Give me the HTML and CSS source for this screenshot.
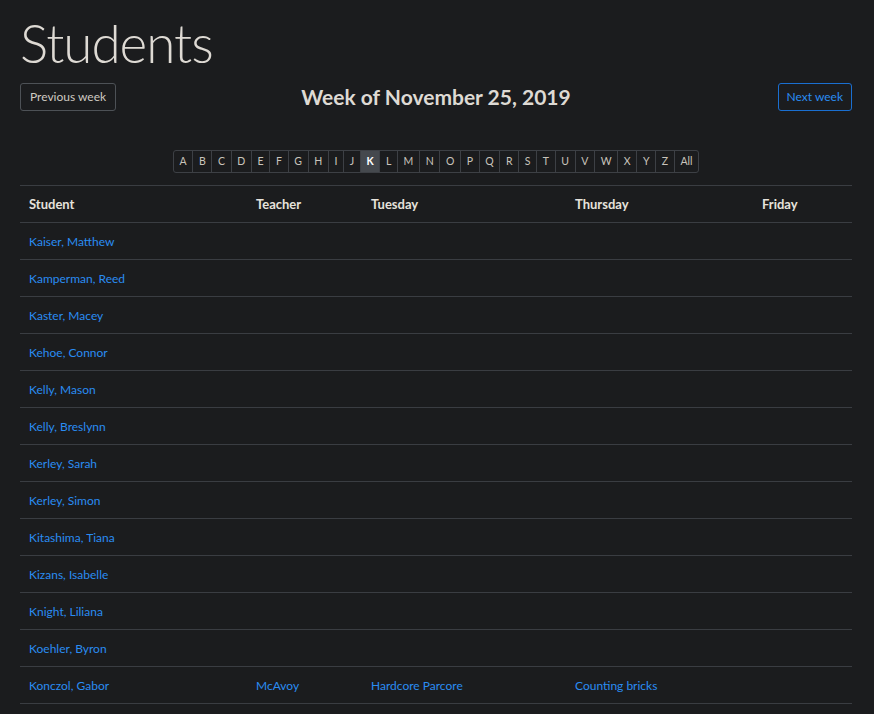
FILE: index.html
```html
<!DOCTYPE html>
<html lang="en">
<head>
<meta charset="utf-8">
<title>Students</title>
<link rel="stylesheet" href="styles.css">
</head>
<body>
<main class="page">
  <h1 class="title">Students</h1>
  <div class="week-nav">
    <div class="week-nav__left"><a class="btn btn--secondary" href="#">Previous week</a></div>
    <h4 class="week-nav__heading">Week of November 25, 2019</h4>
    <div class="week-nav__right"><a class="btn btn--primary" href="#">Next week</a></div>
  </div>
  <nav class="letters">
    <ul class="letters__list">
      <li><a href="#">A</a></li>
      <li><a href="#">B</a></li>
      <li><a href="#">C</a></li>
      <li><a href="#">D</a></li>
      <li><a href="#">E</a></li>
      <li><a href="#">F</a></li>
      <li><a href="#">G</a></li>
      <li><a href="#">H</a></li>
      <li><a href="#">I</a></li>
      <li><a href="#">J</a></li>
      <li class="is-active"><a href="#">K</a></li>
      <li><a href="#">L</a></li>
      <li><a href="#">M</a></li>
      <li><a href="#">N</a></li>
      <li><a href="#">O</a></li>
      <li><a href="#">P</a></li>
      <li><a href="#">Q</a></li>
      <li><a href="#">R</a></li>
      <li><a href="#">S</a></li>
      <li><a href="#">T</a></li>
      <li><a href="#">U</a></li>
      <li><a href="#">V</a></li>
      <li><a href="#">W</a></li>
      <li><a href="#">X</a></li>
      <li><a href="#">Y</a></li>
      <li><a href="#">Z</a></li>
      <li><a href="#">All</a></li>
    </ul>
  </nav>
  <table class="roster">
    <colgroup>
      <col class="col-student">
      <col class="col-teacher">
      <col class="col-tue">
      <col class="col-thu">
      <col class="col-fri">
    </colgroup>
    <thead>
      <tr><th>Student</th><th>Teacher</th><th>Tuesday</th><th>Thursday</th><th>Friday</th></tr>
    </thead>
    <tbody>
      <tr><td><a href="#">Kaiser, Matthew</a></td><td></td><td></td><td></td><td></td></tr>
      <tr><td><a href="#">Kamperman, Reed</a></td><td></td><td></td><td></td><td></td></tr>
      <tr><td><a href="#">Kaster, Macey</a></td><td></td><td></td><td></td><td></td></tr>
      <tr><td><a href="#">Kehoe, Connor</a></td><td></td><td></td><td></td><td></td></tr>
      <tr><td><a href="#">Kelly, Mason</a></td><td></td><td></td><td></td><td></td></tr>
      <tr><td><a href="#">Kelly, Breslynn</a></td><td></td><td></td><td></td><td></td></tr>
      <tr><td><a href="#">Kerley, Sarah</a></td><td></td><td></td><td></td><td></td></tr>
      <tr><td><a href="#">Kerley, Simon</a></td><td></td><td></td><td></td><td></td></tr>
      <tr><td><a href="#">Kitashima, Tiana</a></td><td></td><td></td><td></td><td></td></tr>
      <tr><td><a href="#">Kizans, Isabelle</a></td><td></td><td></td><td></td><td></td></tr>
      <tr><td><a href="#">Knight, Liliana</a></td><td></td><td></td><td></td><td></td></tr>
      <tr><td><a href="#">Koehler, Byron</a></td><td></td><td></td><td></td><td></td></tr>
      <tr><td><a href="#">Konczol, Gabor</a></td><td><a href="#">McAvoy</a></td><td><a href="#">Hardcore Parcore</a></td><td><a href="#">Counting bricks</a></td><td></td></tr>
    </tbody>
  </table>
</main>
</body>
</html>
```

FILE: styles.css
```css
html, body {
  margin: 0;
  padding: 0;
  background: #1b1c1e;
}

body {
  font-family: "Lato", "Open Sans", sans-serif;
  font-size: 12px;
  color: #dedad4;
}

a {
  color: #2a8cf2;
  text-decoration: none;
}

.page {
  padding: 0 22px 0 20px;
}

.title {
  margin: 0;
  padding-top: 10px;
  font-size: 53px;
  font-weight: 300;
  line-height: 66px;
  color: #dedad4;
  letter-spacing: -1px;
}

.week-nav {
  display: grid;
  grid-template-columns: 1fr auto 1fr;
  align-items: center;
  margin-top: 7px;
  height: 28px;
}

.week-nav__right {
  display: flex;
  justify-content: flex-end;
}

.week-nav__heading {
  margin: 0 0 1px;
  font-size: 21px;
  font-weight: 700;
  color: #dedad4;
}

.btn {
  display: inline-block;
  box-sizing: border-box;
  height: 28px;
  line-height: 26px;
  padding: 0 9px;
  border-radius: 3px;
  font-size: 12px;
  border: 1px solid;
}

.btn--secondary {
  border-color: #4d5156;
  color: #cfcac2;
}

.btn--primary {
  border-color: #1a6fd1;
  color: #2a8cf2;
  padding: 0 8px;
}

.letters {
  display: flex;
  justify-content: center;
  margin-top: 39px;
}

.letters__list {
  display: flex;
  list-style: none;
  margin: 0;
  padding: 0;
  border: 1px solid #3d4045;
  border-radius: 3px;
}

.letters__list li + li {
  border-left: 1px solid #3d4045;
}

.letters__list a {
  display: block;
  height: 21px;
  line-height: 21px;
  padding: 0 5.65px;
  font-size: 10.5px;
  color: #c9c4bc;
}

.letters__list .is-active a {
  background: #45494e;
  color: #ffffff;
  font-weight: 700;
}

.roster {
  width: 100%;
  margin-top: 12px;
  border-collapse: collapse;
  table-layout: fixed;
}

.col-student { width: 227px; }
.col-teacher { width: 115px; }
.col-tue { width: 204px; }
.col-thu { width: 187px; }

.roster th,
.roster td {
  height: 36px;
  padding: 0 9px;
  text-align: left;
  vertical-align: middle;
  border-top: 1px solid #3a3d42;
}

.roster thead th {
  font-size: 13px;
  font-weight: 700;
  color: #e6e2dc;
  border-bottom: 1px solid #3a3d42;
}

.roster tbody tr:last-child td {
  border-bottom: 1px solid #3a3d42;
}
```
